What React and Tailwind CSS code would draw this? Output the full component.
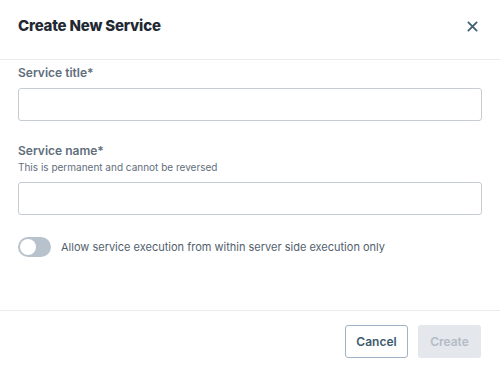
import React from 'react'

function CloseIcon() {
  return (
    <svg width="11" height="11" viewBox="0 0 12 12" fill="none" stroke="#3f6173" strokeWidth="2" strokeLinecap="round">
      <path d="M1.5 1.5 L10.5 10.5 M10.5 1.5 L1.5 10.5" />
    </svg>
  )
}

export default function App() {
  return (
    <div className="w-[500px] h-[367px] bg-white overflow-hidden font-['Inter',sans-serif]">
      <div className="h-[60px] flex items-center justify-between pl-[18px] pr-[22px] border-b border-[#ebebeb]">
        <h2 className="text-[15px] font-extrabold text-[#1f2933] tracking-[-0.2px] mt-[-6px]">Create New Service</h2>
        <button className="mt-[-6px]"><CloseIcon /></button>
      </div>

      <div className="px-[18px] h-[250px]">
        <label className="block mt-[5px] text-[12px] font-semibold text-[#616e7c] leading-[16px]">Service title*</label>
        <div className="mt-[7px] h-[33px] rounded-[3px] border border-[#c7ccd3]"></div>

        <label className="block mt-[22px] text-[12px] font-semibold text-[#616e7c] leading-[16px]">Service name*</label>
        <p className="text-[10px] text-[#616e7c] leading-[14px] mt-[1px]">This is permanent and cannot be reversed</p>
        <div className="mt-[8px] h-[33px] rounded-[3px] border border-[#c7ccd3]"></div>

        <div className="mt-[22px] flex items-center gap-[10px]">
          <div className="w-[33px] h-[20px] rounded-full bg-[#b8c2cc] p-[2px] flex items-center">
            <div className="w-[16px] h-[16px] rounded-full bg-white"></div>
          </div>
          <span className="text-[11px] text-[#52606d]">Allow service execution from within server side execution only</span>
        </div>
      </div>

      <div className="border-t border-[#ebebeb] pt-[14px] pr-[19px] flex justify-end gap-[10px] mt-[-5px]">
        <button className="w-[63px] h-[33px] rounded-[3px] border-[1.5px] border-[#9fb3c8] text-[12px] font-semibold text-[#3e5b6e]">Cancel</button>
        <button className="w-[63px] h-[33px] rounded-[3px] bg-[#e4e7eb] text-[12px] font-semibold text-[#b3bcc6]">Create</button>
      </div>
    </div>
  )
}
